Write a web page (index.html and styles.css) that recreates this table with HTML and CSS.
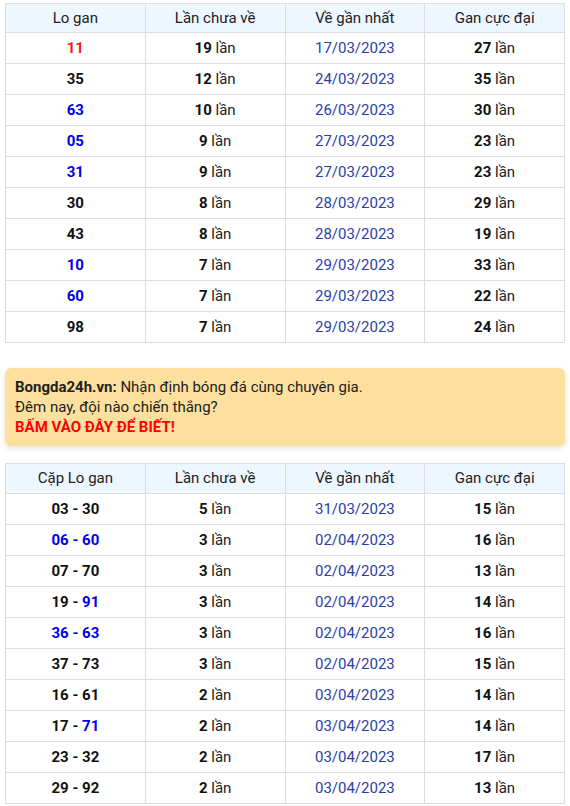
FILE: index.html
```html
<!DOCTYPE html>
<html lang="vi">
<head>
<meta charset="utf-8">
<link rel="stylesheet" href="styles.css">
</head>
<body>
<div class="page">
<table class="gan">
<thead><tr><th>Lo gan</th><th>Lần chưa về</th><th>Về gần nhất</th><th>Gan cực đại</th></tr></thead>
<tbody>
<tr><td class="num red">11</td><td><b>19</b> lần</td><td class="date">17/03/2023</td><td><b>27</b> lần</td></tr>
<tr><td class="num">35</td><td><b>12</b> lần</td><td class="date">24/03/2023</td><td><b>35</b> lần</td></tr>
<tr><td class="num blue">63</td><td><b>10</b> lần</td><td class="date">26/03/2023</td><td><b>30</b> lần</td></tr>
<tr><td class="num blue">05</td><td><b>9</b> lần</td><td class="date">27/03/2023</td><td><b>23</b> lần</td></tr>
<tr><td class="num blue">31</td><td><b>9</b> lần</td><td class="date">27/03/2023</td><td><b>23</b> lần</td></tr>
<tr><td class="num">30</td><td><b>8</b> lần</td><td class="date">28/03/2023</td><td><b>29</b> lần</td></tr>
<tr><td class="num">43</td><td><b>8</b> lần</td><td class="date">28/03/2023</td><td><b>19</b> lần</td></tr>
<tr><td class="num blue">10</td><td><b>7</b> lần</td><td class="date">29/03/2023</td><td><b>33</b> lần</td></tr>
<tr><td class="num blue">60</td><td><b>7</b> lần</td><td class="date">29/03/2023</td><td><b>22</b> lần</td></tr>
<tr><td class="num">98</td><td><b>7</b> lần</td><td class="date">29/03/2023</td><td><b>24</b> lần</td></tr>
</tbody>
</table>

<div class="promo">
<div><b>Bongda24h.vn:</b> Nhận định bóng đá cùng chuyên gia.</div>
<div>Đêm nay, đội nào chiến thắng?</div>
<div class="cta">BẤM VÀO ĐÂY ĐỂ BIẾT!</div>
</div>

<table class="gan pairs">
<thead><tr><th>Cặp Lo gan</th><th>Lần chưa về</th><th>Về gần nhất</th><th>Gan cực đại</th></tr></thead>
<tbody>
<tr><td class="num">03 - 30</td><td><b>5</b> lần</td><td class="date">31/03/2023</td><td><b>15</b> lần</td></tr>
<tr><td class="num blue">06 - 60</td><td><b>3</b> lần</td><td class="date">02/04/2023</td><td><b>16</b> lần</td></tr>
<tr><td class="num">07 - 70</td><td><b>3</b> lần</td><td class="date">02/04/2023</td><td><b>13</b> lần</td></tr>
<tr><td class="num">19 - <span class="blue">91</span></td><td><b>3</b> lần</td><td class="date">02/04/2023</td><td><b>14</b> lần</td></tr>
<tr><td class="num blue">36 - 63</td><td><b>3</b> lần</td><td class="date">02/04/2023</td><td><b>16</b> lần</td></tr>
<tr><td class="num">37 - 73</td><td><b>3</b> lần</td><td class="date">02/04/2023</td><td><b>15</b> lần</td></tr>
<tr><td class="num">16 - 61</td><td><b>2</b> lần</td><td class="date">03/04/2023</td><td><b>14</b> lần</td></tr>
<tr><td class="num">17 - <span class="blue">71</span></td><td><b>2</b> lần</td><td class="date">03/04/2023</td><td><b>14</b> lần</td></tr>
<tr><td class="num">23 - 32</td><td><b>2</b> lần</td><td class="date">03/04/2023</td><td><b>17</b> lần</td></tr>
<tr><td class="num">29 - 92</td><td><b>2</b> lần</td><td class="date">03/04/2023</td><td><b>13</b> lần</td></tr>
</tbody>
</table>
</div>
</body>
</html>
```

FILE: styles.css
```css
html, body {
  margin: 0;
  padding: 0;
  background: #fff;
}
body {
  font-family: Roboto, "Liberation Sans", Arial, sans-serif;
  font-size: 15px;
  color: #222;
}
.page {
  padding: 3px 5px 0 5px;
}
.gan {
  width: 560px;
  border-collapse: collapse;
  table-layout: fixed;
}
.gan th, .gan td {
  border: 1px solid #dddddd;
  text-align: center;
  padding: 0;
}
.gan th {
  height: 28px;
  background: #eef6ff;
  font-weight: 400;
  color: #222;
}
.pairs th {
  padding-bottom: 1px;
}
.gan td {
  height: 30px;
  color: #222;
}
.gan td b, .gan td.num {
  font-weight: 700;
  color: #111;
}
.gan td.date {
  color: #2c3ea8;
}
.gan td.red { color: #ee1c25; }
.gan .blue, .gan td.num.blue { color: #0000ee; }
.promo {
  margin: 25px 0 17px 0;
  background: #fde09d;
  border-radius: 6px;
  padding: 9px 10px 9px 10px;
  box-shadow: 0 2px 6px rgba(0,0,0,0.12);
  line-height: 20px;
  color: #222;
}
.promo b { font-weight: 700; }
.promo .cta {
  color: #ff0000;
  font-weight: 700;
}
```
